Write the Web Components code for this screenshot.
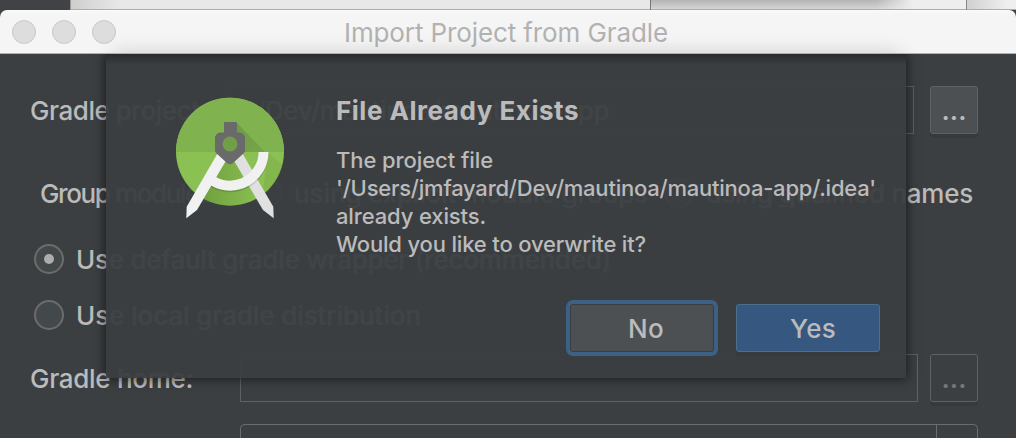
<!DOCTYPE html>
<html lang="en">
<head>
<meta charset="utf-8">
<title>Import Project from Gradle</title>
<style>
  body {
    margin: 0;
    width: 1016px;
    height: 438px;
    overflow: hidden;
    background: #3c3f41;
    color: #bbbbbb;
    font: 450 26px/1 Inter, "Liberation Sans", sans-serif;
  }
</style>
</head>
<body>
<desktop-strip></desktop-strip>
<app-window heading="Import Project from Gradle">
  <form-row style="--label: 196px">
    <fit-text slot="label" width="177">Gradle project:</fit-text>
    <text-field style="width: 688px"><fit-text width="370">~/Dev/mautinoa/mautinoa-app</fit-text></text-field>
    <ide-button square>...</ide-button>
  </form-row>
  <form-row style="--label: 212px; --indent: 10px; margin-top: 35px">
    <fit-text slot="label" width="178">Group modules:</fit-text>
    <radio-option width="354">using explicit module <u>g</u>roups</radio-option>
    <radio-option width="267">using <u>q</u>ualified names</radio-option>
  </form-row>
  <form-row style="--label: 0px; --indent: 4px; margin-top: 18px">
    <radio-option width="535" checked>Use default gradle wrapper (recommended)</radio-option>
  </form-row>
  <form-row style="--label: 0px; --indent: 4px; margin-top: 8px">
    <radio-option width="345">Use local gradle distribution</radio-option>
  </form-row>
  <form-row style="--label: 210px; margin-top: 15px">
    <fit-text slot="label" width="163">Gradle home:</fit-text>
    <text-field style="width: 678px; margin-right: -4px"></text-field>
    <ide-button square disabled>...</ide-button>
  </form-row>
  <form-row style="--label: 210px; height: 14px; margin-top: 22px">
    <combo-box></combo-box>
  </form-row>
</app-window>
<message-dialog>
  <studio-logo slot="icon"></studio-logo>
  <fit-text slot="heading" width="243">File Already Exists</fit-text>
  <fit-text width="157">The project file</fit-text>
  <fit-text width="540">'/Users/jmfayard/Dev/mautinoa/mautinoa-app/.idea'</fit-text>
  <fit-text width="150">already exists.</fit-text>
  <fit-text width="310">Would you like to overwrite it?</fit-text>
  <ide-button slot="actions" focused><fit-text width="36">No</fit-text></ide-button>
  <ide-button slot="actions" primary><fit-text width="46">Yes</fit-text></ide-button>
</message-dialog>

<script>
class BaseElement extends HTMLElement {
  constructor() {
    super();
    this.attachShadow({ mode: "open" });
  }

  connectedCallback() {
    this.shadowRoot.innerHTML = this.render().trim();
    this.ready();
  }

  ready() {}
}

// One line of text, tracked so that it takes the given width
class FitText extends BaseElement {
  render() {
    return `
      <style>
        :host { display: block; }
        span { display: inline-block; white-space: pre; }
      </style>
      <span><slot></slot></span>`;
  }

  ready() {
    const target = Number(this.getAttribute("width"));
    const span = this.shadowRoot.querySelector("span");
    const natural = span.getBoundingClientRect().width;
    const count = this.textContent.length;
    span.style.letterSpacing = `${(target - natural) / count}px`;
  }
}

class DesktopStrip extends BaseElement {
  render() {
    return `
      <style>
        :host {
          display: grid;
          grid-template-columns: 70px 580px 316px 1fr;
          height: 10px;
          background: #414245;
        }
        div { box-shadow: inset 0 -1px #adadad; }
        .first { box-shadow: none; }
        .second { background: linear-gradient(90deg, #cecece, #e8e8e8 50px); border-left: 1px solid #999; }
        .third { background: linear-gradient(90deg, transparent 225px, #eee 262px), linear-gradient(#b5b5b5, #d8d8d8); border-left: 1px solid #777; }
        .fourth { background: linear-gradient(90deg, #d0d0d0, #efefef 40px); border-left: 1px solid #888; }
      </style>
      <div class="first"></div>
      <div class="second"></div>
      <div class="third"></div>
      <div class="fourth"></div>`;
  }
}

class AppWindow extends BaseElement {
  render() {
    return `
      <style>
        :host { display: block; height: 428px; overflow: hidden; background: linear-gradient(#414245 10px, #3c3f41 10px); }
        header {
          position: relative;
          display: grid;
          grid-template-columns: 344px auto 1fr;
          align-items: center;
          box-sizing: border-box;
          height: 44px;
          padding-top: 1px;
          border-bottom: 1px solid #b0b0b0;
          border-radius: 7px 7px 0 0;
          overflow: hidden;
          background: linear-gradient(#fafafa, #f5f5f5 4px);
          color: #b2b2b2;
          font-weight: 400;
        }
        /* shadow that the dialog sheet casts up on the title bar */
        header::after {
          content: "";
          position: absolute;
          left: 112px;
          right: 116px;
          top: 100%;
          height: 30px;
          box-shadow: 0 0 20px rgba(0, 0, 0, 0.16);
        }
        .lights { display: flex; gap: 16px; margin-top: -1px; padding-left: 12px; }
        .lights i {
          box-sizing: border-box;
          width: 24px;
          height: 24px;
          border: 1px solid #c8c8c8;
          border-radius: 50%;
          background: #dddddd;
        }
        fit-text { margin-top: 1px; }
        main { padding: 32px 38px 0 30px; }
      </style>
      <header>
        <div class="lights"><i></i><i></i><i></i></div>
        <fit-text width="324">${this.getAttribute("heading")}</fit-text>
      </header>
      <main><slot></slot></main>`;
  }
}

class FormRow extends BaseElement {
  render() {
    return `
      <style>
        :host { display: flex; align-items: center; height: 48px; padding-left: var(--indent, 0); }
        .label { flex: none; width: var(--label); margin-top: 1px; }
        .content { flex: 1; display: flex; align-items: center; gap: 16px; }
      </style>
      <div class="label"><slot name="label"></slot></div>
      <div class="content"><slot></slot></div>`;
  }
}

class TextField extends BaseElement {
  render() {
    return `
      <style>
        :host {
          display: flex;
          align-items: center;
          flex: none;
          box-sizing: border-box;
          height: 48px;
          padding: 1px 0 0 12px;
          border: 1px solid #606162;
        }
      </style>
      <slot></slot>`;
  }
}

// Only the top of the box shows, the window is cut off below it
class ComboBox extends BaseElement {
  render() {
    return `
      <style>
        :host {
          display: flex;
          justify-content: flex-end;
          flex: 1;
          box-sizing: border-box;
          height: 14px;
          border: 1px solid #6b6c6d;
          border-bottom: none;
          border-radius: 5px 5px 0 0;
        }
        div { width: 40px; border-left: 1px solid #6b6c6d; }
      </style>
      <div></div>`;
  }
}

class RadioOption extends BaseElement {
  render() {
    return `
      <style>
        :host { display: flex; align-items: center; gap: 12px; }
        i {
          display: grid;
          place-items: center;
          box-sizing: border-box;
          width: 30px;
          height: 30px;
          border: 2px solid #6c6c6b;
          border-radius: 50%;
          background: #43494a;
        }
        :host([checked]) i::after {
          content: "";
          width: 10px;
          height: 10px;
          border-radius: 50%;
          background: #adadad;
        }
        fit-text { margin-top: 1px; }
      </style>
      <i></i>
      <fit-text width="${this.getAttribute("width")}">${this.innerHTML}</fit-text>`;
  }
}

class IdeButton extends BaseElement {
  render() {
    return `
      <style>
        :host {
          display: flex;
          align-items: center;
          justify-content: center;
          flex: none;
          box-sizing: border-box;
          width: 144px;
          height: 48px;
          padding: 2px 0 0 8px;
          border: 1px solid #5f6162;
          border-radius: 3px;
          background: #4c5052;
          box-shadow: 0 4px #37393b;
        }
        :host([square]) { width: 48px; padding: 2px 0 0; font-weight: 600; }
        :host([disabled]) { background: none; color: #777777; }
        :host([primary]) { padding-left: 10px; border-color: #4c708c; background: #365880; }
        :host([focused]) { border-color: #3a3d3f; box-shadow: 0 0 0 4px #3d6185; }
      </style>
      <slot></slot>`;
  }
}

class StudioLogo extends BaseElement {
  render() {
    return `
      <style>
        :host { display: block; width: 108px; height: 122px; }
        svg { display: block; }
      </style>
      <svg width="108" height="122" viewBox="11 12 108 122">
        <defs>
          <linearGradient id="shade" x1="0" y1="0" x2="1" y2="1">
            <stop offset="0" stop-color="#000" stop-opacity="0.15"/>
            <stop offset="1" stop-color="#000" stop-opacity="0.08"/>
          </linearGradient>
          <linearGradient id="low" x1="0" y1="0" x2="1" y2="0">
            <stop offset="0" stop-color="#3f651d" stop-opacity="0.4"/>
            <stop offset="1" stop-color="#3f651d" stop-opacity="0"/>
          </linearGradient>
          <clipPath id="disc"><circle cx="65" cy="66.7" r="54"/></clipPath>
        </defs>
        <g clip-path="url(#disc)">
          <path fill="#8bc152" d="M11 12h108v109H11z"/>
          <path fill="#80b34f" d="M11 12h108v55H11z"/>
          <path fill="url(#shade)" d="M72 38l28 29H55V50h17z"/>
          <path fill="url(#low)" d="M61 76L31 125H97L69 76z"/>
          <path fill="#000" opacity="0.05" d="M103 67l20 18v40h-20L98 105z"/>
        </g>
        <path fill="#e0e0e0" d="M77.5 68.5l30.8 53.3.4 11.5-10.7-8.3L69 75.5z"/>
        <path fill="none" stroke="#000" stroke-opacity="0.15" stroke-width="10" d="M98.5 68A33.5 33.5 0 0 1 48 97.5"/>
        <path fill="none" stroke="#f1f1f1" stroke-width="10" d="M98.5 67A33.5 33.5 0 0 1 48 96"/>
        <path fill="#f1f1f1" d="M52.5 68.5L21.7 121.8l-.4 11.5L32 125 61 75.5z"/>
        <path fill="#6a6a6a" fill-rule="evenodd" d="M60 37h11q1 0 1 1v9.5h3q2 0 3.2 1.5t1.800 3V65q0 2-1 3L68 78q-3 2.500-6 0L51 68q-1-1-1-3V52q.5-1.500 1.800-3t3.200-1.500h4V38q0-1 1-1zM65 51.500a7.500 7.500 0 1 0 0 15 7.500 7.500 0 1 0 0-15z"/>
      </svg>`;
  }
}

class MessageDialog extends BaseElement {
  render() {
    return `
      <style>
        :host {
          position: absolute;
          left: 0;
          top: 54px;
          width: 1016px;
          height: 384px;
          overflow: hidden;
        }
        section {
          display: grid;
          grid-template-columns: 108px auto;
          grid-template-rows: 206px 48px;
          column-gap: 52px;
          box-sizing: border-box;
          width: 800px;
          height: 324px;
          margin-left: 106px;
          padding: 43px 26px 0 70px;
          background:
            linear-gradient(rgba(0, 0, 0, 0.32), transparent 11px),
            rgba(60, 63, 65, 0.955);
          box-shadow: 0 0 10px 1px rgba(0, 0, 0, 0.6);
        }
        .text { font-size: 22px; line-height: 28px; }
        .heading { margin-bottom: 21px; font-size: 26px; font-weight: 700; }
        .actions { grid-column: 1 / 3; display: flex; justify-content: flex-end; gap: 22px; margin-top: 1px; height: 48px; }
      </style>
      <section>
        <slot name="icon"></slot>
        <div class="text">
          <div class="heading"><slot name="heading"></slot></div>
          <slot></slot>
        </div>
        <div class="actions"><slot name="actions"></slot></div>
      </section>`;
  }
}

customElements.define("desktop-strip", DesktopStrip);
customElements.define("app-window", AppWindow);
customElements.define("form-row", FormRow);
customElements.define("text-field", TextField);
customElements.define("combo-box", ComboBox);
customElements.define("radio-option", RadioOption);
customElements.define("ide-button", IdeButton);
customElements.define("studio-logo", StudioLogo);
customElements.define("message-dialog", MessageDialog);
// Registered last: it measures text in the layout of the elements above
customElements.define("fit-text", FitText);
</script>
</body>
</html>
